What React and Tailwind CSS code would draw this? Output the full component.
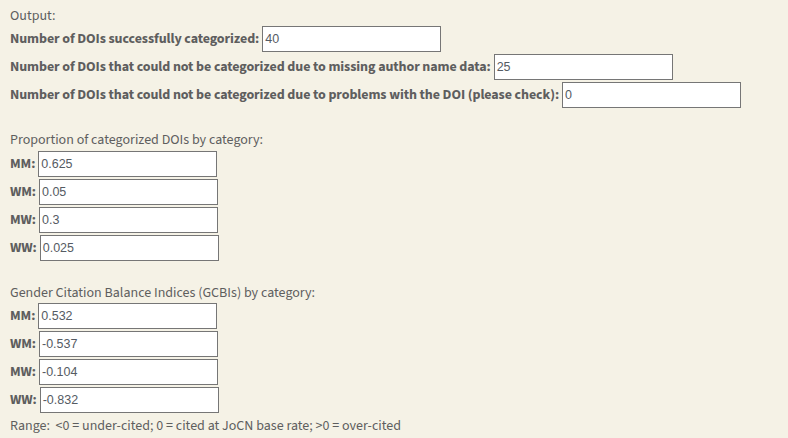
import React from "react";

function Field({ label, value }) {
  return (
    <div className="flex items-center gap-[3px]">
      <span className="font-bold tracking-[-0.09px] whitespace-nowrap">{label}</span>
      <div className="flex h-[26px] w-[179px] shrink-0 items-center border border-[#767676] bg-white px-[2px] font-['Liberation_Sans',Arial,sans-serif] text-[12.5px] leading-[15px] text-[#555b63]">
        {value}
      </div>
    </div>
  );
}

function Group({ children }) {
  return <div className="flex flex-col gap-[2px]">{children}</div>;
}

export default function App() {
  return (
    <div className="min-h-screen w-full bg-[#f5f2e6] pl-[10px] pt-[6px] font-['Source_Sans_3','Source_Sans_Pro',Lato,sans-serif] text-[14px] leading-[20px] text-[#5e5e5e]">
      <div>Output:</div>
      <Group>
        <Field label="Number of DOIs successfully categorized:" value="40" />
        <Field label="Number of DOIs that could not be categorized due to missing author name data:" value="25" />
        <Field label="Number of DOIs that could not be categorized due to problems with the DOI (please check):" value="0" />
      </Group>

      <div className="mt-[22px] mb-[1px]">Proportion of categorized DOIs by category:</div>
      <Group>
        <Field label="MM:" value="0.625" />
        <Field label="WM:" value="0.05" />
        <Field label="MW:" value="0.3" />
        <Field label="WW:" value="0.025" />
      </Group>

      <div className="mt-[22px]">Gender Citation Balance Indices (GCBIs) by category:</div>
      <Group>
        <Field label="MM:" value="0.532" />
        <Field label="WM:" value="-0.537" />
        <Field label="MW:" value="-0.104" />
        <Field label="WW:" value="-0.832" />
      </Group>
      <div className="mt-[3px]">Range:{"\u00a0 "}&lt;0 = under-cited; 0 = cited at JoCN base rate; &gt;0 = over-cited</div>
    </div>
  );
}
